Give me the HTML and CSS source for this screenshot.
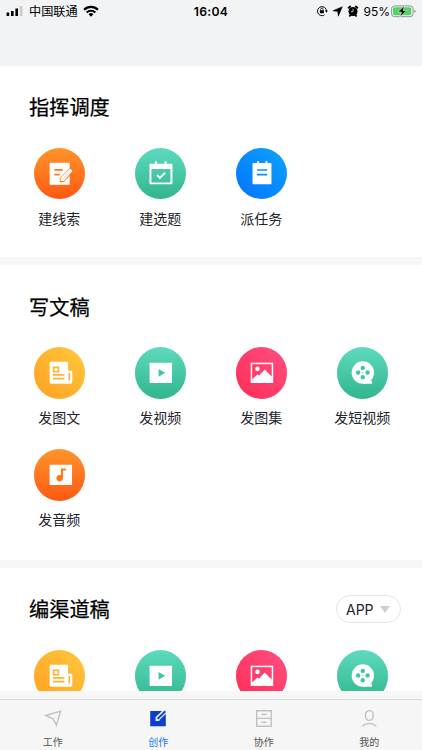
FILE: index.html
```html
<!DOCTYPE html>
<html lang="zh-CN">
<head>
<meta charset="utf-8">
<title>创作</title>
<link rel="stylesheet" href="styles.css">
</head>
<body>
<svg class="defs" width="0" height="0" aria-hidden="true">
  <symbol id="clue" viewBox="-26 -26 52 52">
    <path fill="#fff" d="M-9.5-11H10v22H-9.500q-.7 0-.7-.7v-20.600q0-.7.7-.7z"/>
    <path stroke="#ff7a1c" stroke-width="1.700" d="M-5.500-4H3M-5.500.9H0"/>
    <path stroke="#ff7a1c" stroke-width="5.600" d="M13.500-5.500L2.200 6.300"/>
    <path fill="#ff7a1c" d="M0 3.500V8.500h5z"/>
    <path fill="#fff" d="M10.300-5.200l2.500 2.500L4.200 7.300H.8V4.200z"/>
    <path stroke="#ff8a3a" stroke-width=".5" d="M3.300 5.200L8.700-.6"/>
  </symbol>
  <symbol id="topic" viewBox="-26 -26 52 52">
    <path fill="#fff" fill-rule="evenodd" d="M-10.700-10.200h4.800v-2.300h2v2.300h7.800v-2.300h2v2.300h5.200q.7 0 .7.700V9.900q0 .7-.7.700h-21.800q-.7 0-.7-.7V-9.500q0-.7.700-.7zM-9.400-4.700V8.900H9.800V-4.700z"/>
    <path fill="none" stroke="#fff" stroke-width="2" d="M-3.800 1.200l3 3 5.300-5.300"/>
  </symbol>
  <symbol id="task" viewBox="-26 -26 52 52">
    <path fill="#fff" d="M-8.600-10.800h3.900v-1.900h2v1.900h6.500v-1.900h2v1.900h3.300q.7 0 .7.700V10q0 .7-.7.700H-8.600q-.7 0-.7-.7v-20.100q0-.7.700-.7z"/>
    <path stroke="#078bff" stroke-width="1.700" d="M-4.700-3.800H5.400M-4.700.8H5.400"/>
  </symbol>
  <symbol id="news" viewBox="-26 -26 52 52">
    <path fill="#fff" d="M-9.400-11H7.700q.7 0 .7.700v8.200h3.500q.8 0 .8.800V8.500q0 2.600-2.600 2.600H-7.600q-2.600 0-2.600-2.600v-18.700q0-.8.800-.8z"/>
    <path fill="none" stroke="#ffb32e" stroke-width="1.700" d="M-6.200-5.500h4.800v4.500h-4.800zM-7 2.200H4.700M-7 5.900H4.700M9.600.2v7.300"/>
  </symbol>
  <symbol id="video" viewBox="-26 -26 52 52">
    <rect x="-11.300" y="-10.200" width="22.700" height="20.600" rx=".7" fill="#fff"/>
    <path fill="#42c6a4" d="M-2.200-3.800L4.500.1-2.200 4z"/>
  </symbol>
  <symbol id="image" viewBox="-26 -26 52 52">
    <rect x="-10.400" y="-9.400" width="21.200" height="19" fill="none" stroke="#fff" stroke-width="1.500"/>
    <circle cx="-4.300" cy="-3.900" r="2.300" fill="#fff"/>
    <path fill="#fff" d="M-10 7L-4.500 1.800l1.800 1.100L3-3.300 10.500 4.300V9.600H-10z"/>
  </symbol>
  <symbol id="film" viewBox="-26 -26 52 52">
    <circle cx=".1" cy="-.2" r="11.300" fill="#fff"/>
    <path fill="#fff" d="M6.500 6.500L7.500 8.200H9.300V11H0z"/>
    <g fill="#42c6a4"><circle cy="-4.900" r="2.200"/><circle cy="4.500" r="2.200"/><circle cx="-4.700" cy="-.2" r="2.200"/><circle cx="4.900" cy="-.2" r="2.200"/><circle cy="-.2" r=".6"/></g>
  </symbol>
  <symbol id="music" viewBox="-26 -26 52 52">
    <rect x="-10.300" y="-10.200" width="22.700" height="20.600" rx=".7" fill="#fff"/>
    <path fill="#ff7619" d="M1.200-6.300h4.900v2.100H3.200v7.700A3.300 3.300 0 1 1 1.200.5z"/>
  </symbol>
</svg>
<div class="screen">
  <header class="header">
    <div class="status">
      <div class="status-left">
        <svg width="18" height="12" viewBox="0 0 18 12"><path d="M.6 7.500h2.600v3.500H.6zM5 6h2.600v5H5zM9.400 3.600H12V11H9.400z"/><path fill="#c8cacc" d="M13.800 1h2.600v10h-2.600z"/></svg>
        <span class="carrier">中国联通</span>
        <svg width="16" height="12" viewBox="0 0 16 12"><g fill="none" stroke="#000" stroke-width="2.200"><path d="M1.100 4.700a9.800 9.800 0 0 1 13.800 0M3.700 7.500a6.100 6.100 0 0 1 8.600 0"/></g><path d="M5.600 9.200a3.400 3.400 0 0 1 4.800 0L8 11.700z"/></svg>
      </div>
      <div class="clock">16:04</div>
      <div class="status-right">
        <svg width="12" height="12" viewBox="0 0 12 12"><path fill="none" stroke="#111" d="M8.500 9.900A4.500 4.500 0 1 1 10.500 6"/><path d="M8.900 5.500h3L10.400 7.700z"/><rect x="3.900" y="5.200" width="4" height="3" rx=".4"/><path fill="none" stroke="#111" stroke-width=".8" d="M4.700 5.500V4.300a1.200 1.200 0 0 1 2.400 0v1.200"/></svg>
        <svg width="11" height="11" viewBox="0 0 11 11"><path stroke="#000" stroke-width=".5" d="M10.300.7L6.400 10.200 5.600 5.500.9 4.800z"/></svg>
        <svg width="12" height="12" viewBox="0 0 12 12"><circle cx="6" cy="6.500" r="4.500"/><path stroke="#000" stroke-width="1.800" stroke-linecap="round" d="M1.700 2.700l1.500-1.200M10.300 2.700L8.800 1.500M2.800 10.800l1-1M9.200 10.800l-1-1"/><path fill="none" stroke="#f2f3f5" stroke-width=".7" d="M6 3.800v2.900H3.800"/></svg>
        <span class="percent">95%</span>
        <svg width="26" height="13" viewBox="0 0 26 13"><rect x=".6" y=".9" width="21.500" height="10.800" rx="3" fill="none" stroke="#8f9592"/><rect x="2" y="2.300" width="18.300" height="8" rx="1.700" fill="#4fd465"/><path fill="#9fa4a2" d="M23.200 4.500q1.500.5 1.500 1.800t-1.500 1.800z"/><path stroke="#f2f3f5" stroke-width=".6" d="M13.600.8L6.900 7.100h3.700L8.900 12l6.800-6.400H12z"/></svg>
      </div>
    </div>
  </header>
  <main class="content">
    <section class="panel panel-dispatch">
      <div class="panel-head"><h2>指挥调度</h2></div>
      <div class="grid">
        <div class="item"><svg class="disc orange"><use href="#clue"/></svg><span>建线索</span></div>
        <div class="item"><svg class="disc green"><use href="#topic"/></svg><span>建选题</span></div>
        <div class="item"><svg class="disc blue"><use href="#task"/></svg><span>派任务</span></div>
      </div>
    </section>
    <section class="panel panel-write">
      <div class="panel-head"><h2>写文稿</h2></div>
      <div class="grid">
        <div class="item"><svg class="disc yellow"><use href="#news"/></svg><span>发图文</span></div>
        <div class="item"><svg class="disc green"><use href="#video"/></svg><span>发视频</span></div>
        <div class="item"><svg class="disc pink"><use href="#image"/></svg><span>发图集</span></div>
        <div class="item"><svg class="disc green"><use href="#film"/></svg><span>发短视频</span></div>
        <div class="item"><svg class="disc orange"><use href="#music"/></svg><span>发音频</span></div>
      </div>
    </section>
    <section class="panel panel-channel">
      <div class="panel-head"><h2>编渠道稿</h2><div class="select">APP<i class="caret"></i></div></div>
      <div class="grid">
        <div class="item"><svg class="disc yellow"><use href="#news"/></svg></div>
        <div class="item"><svg class="disc green"><use href="#video"/></svg></div>
        <div class="item"><svg class="disc pink"><use href="#image"/></svg></div>
        <div class="item"><svg class="disc green"><use href="#film"/></svg></div>
      </div>
    </section>
  </main>
  <nav class="tabs">
    <div class="tab"><svg width="18" height="18" viewBox="0 0 18 18"><path fill="none" stroke="#c0c1c4" stroke-width="1.400" d="M1.600 6.500L16.500 2.200 12.400 16.200 9.200 9.900z"/></svg><span>工作</span></div>
    <div class="tab active"><svg width="18" height="18" viewBox="0 0 18 18"><path fill="#0a3fd0" d="M1.700 2h14.600q.5 0 .5.500v14.300q0 .5-.5.500H1.700q-.5 0-.5-.5V2.500q0-.5.500-.5z"/><path stroke="#f6f6f6" stroke-width="4.600" d="M18.500 0L8 10"/><path fill="#f6f6f6" d="M6.600 7.900v4.100h4.300z"/><path stroke="#0a3fd0" stroke-width="2" d="M16.300 2.300L8.600 9.900"/></svg><span>创作</span></div>
    <div class="tab"><svg width="18" height="18" viewBox="0 0 18 18"><path fill="none" stroke="#c0c1c4" stroke-width="1.400" d="M1.700 1.700h14.500v15.500H1.700zM1.700 9.400h14.500M6.500 5.500h5M6.500 13.200h5"/></svg><span>协作</span></div>
    <div class="tab"><svg width="18" height="18" viewBox="0 0 18 18"><rect x="5.500" y="1.600" width="7.600" height="9.800" rx="3.800" fill="none" stroke="#c0c1c4" stroke-width="1.400"/><path fill="none" stroke="#c0c1c4" stroke-width="1.400" d="M2.300 17.200q3-2.800 7-2.800t7 2.800"/></svg><span>我的</span></div>
  </nav>
</div>
</body>
</html>
```
FILE: styles.css
```css
* { box-sizing: border-box; }
body {
  margin: 0;
  font-family: Inter, "Noto Sans CJK SC", sans-serif;
  color: #22232d;
}
.defs { display: block; }
.screen {
  display: flex;
  flex-direction: column;
  width: 422px;
  height: 750px;
  overflow: hidden;
  background: #f7f7f7;
}
.header { flex: none; height: 66px; background: #f2f3f5; }
.status {
  display: grid;
  grid-template-columns: 1fr auto 1fr;
  align-items: center;
  height: 22px;
  padding: 0 6px;
  color: #000;
}
.status svg { flex: none; }
.status-left { display: flex; align-items: center; }
.carrier { margin: 0 5px; padding-top: 1px; font-size: 12.200px; line-height: 21px; }
.clock { font-size: 12.200px; font-weight: 600; letter-spacing: .3px; }
.status-right { display: flex; align-items: center; justify-content: flex-end; gap: 4px; margin-right: -1px; }
.percent { font-size: 12px; margin-right: -3px; }
.content {
  flex: none;
  display: flex;
  flex-direction: column;
  gap: 8px;
  height: 625px;
  overflow: hidden;
}
.panel { flex: none; background: #fff; }
.panel-dispatch { height: 191px; }
.panel-write { height: 295px; }
.panel-channel { height: 123px; }
.panel-head {
  display: flex;
  align-items: center;
  justify-content: space-between;
  height: 82px;
  padding: 0 21px 0 29px;
}
.panel-dispatch .panel-head { height: 81.500px; }
h2 {
  margin: 0;
  padding-top: 2px;
  color: #000;
  font-size: 20.200px;
  font-weight: 400;
  line-height: 30px;
  -webkit-text-stroke: .25px #000;
}
.panel-write h2 { padding-top: 4px; }
.grid {
  display: grid;
  grid-template-columns: repeat(4, 101px);
  grid-auto-rows: 102px;
  padding-left: 8.750px;
}
.item { display: flex; flex-direction: column; align-items: center; font-size: 14px; line-height: 20px; }
.item span { margin-top: 9.500px; }
.disc { display: block; width: 51.500px; height: 51.500px; border-radius: 50%; }
.orange { background: linear-gradient(#ff942a, #fd5913); }
.green { background: linear-gradient(#5edabe, #30b68e); }
.blue { background: linear-gradient(45deg, #0074ff, #0da4ff); }
.yellow { background: linear-gradient(45deg, #ffa022, #ffc83c); }
.pink { background: linear-gradient(45deg, #ff2d55, #ff4f83); }
.select {
  display: flex;
  align-items: center;
  justify-content: space-between;
  width: 65px;
  height: 28px;
  padding: 0 10px 0 9px;
  border: 1px solid #e4e4e6;
  border-radius: 14px;
  font-size: 14px;
}
.caret { border: 5px solid transparent; border-top: 7px solid #cfcfd1; border-bottom: 0; }
.tabs {
  display: grid;
  grid-template-columns: repeat(4, 1fr);
  flex: none;
  height: 51px;
  margin-top: 8px;
  border-top: 1px solid #d9d9db;
  background: #f6f6f6;
}
.tab {
  display: flex;
  flex-direction: column;
  align-items: center;
  padding-top: 9px;
  color: #555;
  font-size: 10px;
  line-height: 14px;
}
.tab span { margin-top: 8px; }
.active { color: #1677ee; }
```
